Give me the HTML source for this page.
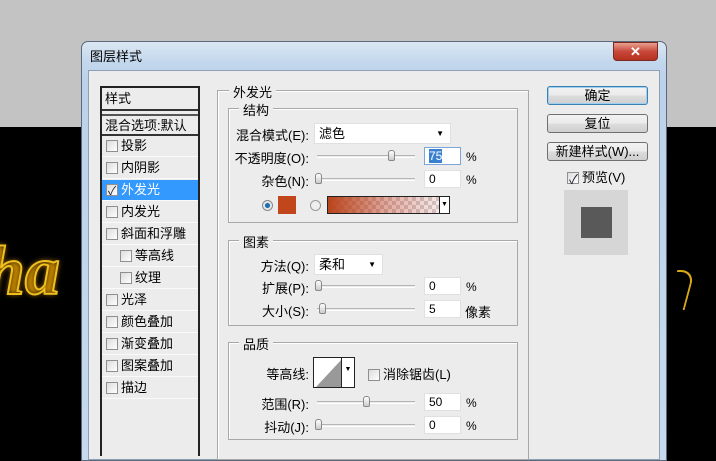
<!DOCTYPE html>
<html><head><meta charset="utf-8"><style>
*{box-sizing:border-box;margin:0;padding:0}
body{width:716px;height:450px;overflow:hidden;position:relative;background:#000;font-family:"Liberation Sans","Microsoft YaHei","Noto Sans CJK SC",sans-serif;font-size:12px;color:#000}
.a{position:absolute}
.top{left:0;top:0;width:716px;height:127px;background:#c3c3c3}
.frame{left:81px;top:41px;width:586px;height:420px;border-radius:7px 7px 0 0;background:linear-gradient(180deg,#dbe7f3 0,#c3d7ec 20px,#bcd2ea 40px,#c6d9ee 100%);border:1px solid #5a6a7c}
.client{left:88px;top:70px;width:572px;height:390px;background:#ececec;border:1px solid #8ea0b4}
.lbl{white-space:nowrap}
.list{left:100px;top:86px;width:100px;height:370px;border:2px solid #222;border-bottom:none;background:#ececec}
.item{position:absolute;left:0;width:96px;height:21px;border-bottom:1px solid #fafafa;line-height:20px;font-size:13px}
.cb{display:inline-block;width:12px;height:12px;border:1px solid #8f8f8f;background:linear-gradient(135deg,#dcdcdc,#fff);vertical-align:-2px;margin-right:3px}
.grp{border:1px solid #a8a8a8;box-shadow:1px 1px 0 #fff inset}
.gt{position:absolute;background:#ececec;padding:0 4px;font-size:13px}
.inp{background:#fff;border:1px solid #e0e0e0;height:18px;width:37px;line-height:17px;padding-left:4px}
.track{height:3px;border-top:1px solid #b5b5b5;border-bottom:1px solid #fff;width:98px}
.th{width:7px;height:11px;border:1px solid #888;border-radius:3px 3px 2px 2px;background:linear-gradient(#fff,#ccc)}
.btn{left:547px;width:101px;height:19px;border:1px solid #707070;border-radius:3px;background:linear-gradient(#f2f2f2 0,#ebebeb 50%,#dddddd 51%,#cfcfcf 100%);text-align:center;line-height:17px;font-size:13px}
.rt{text-align:right;width:90px}
</style></head><body>
<div class="a top"></div>
<div class="a" style="left:-14px;top:232px;font:italic bold 70px 'Liberation Serif',serif;color:transparent;-webkit-text-stroke:2px #f0c020;text-shadow:0 0 6px #c98a00">ha</div>
<div class="a" style="left:672px;top:270px;width:18px;height:40px;border:2px solid #d9a816;border-left:none;border-bottom:none;border-radius:0 14px 0 0;transform:skewX(-15deg)"></div>
<div class="a frame"></div>
<div class="a lbl" style="left:90px;top:46px;font-size:13px">图层样式</div>
<div class="a" style="left:613px;top:42px;width:45px;height:19px;border:1px solid #7a2a20;border-radius:0 0 4px 4px;background:linear-gradient(#e8a090,#c8483a 50%,#b53020);color:#fff;text-align:center;font:bold 13px/17px 'Liberation Sans',sans-serif">✕</div>
<div class="a client"></div>

<div class="a list">
 <div class="item" style="top:0;height:23px;border-bottom:2px solid #333;line-height:22px;padding-left:3px;background:#ececec">样式</div>
 <div class="item" style="top:26px;height:22px;border-top:2px solid #555;border-bottom:2px solid #333;line-height:19px;padding-left:3px">混合选项:默认</div>
 <div class="item" style="top:48px;padding-left:4px"><span class="cb"></span>投影</div>
 <div class="item" style="top:70px;padding-left:4px"><span class="cb"></span>内阴影</div>
 <div class="item" style="top:92px;padding-left:4px;background:#3399ff;color:#fff"><span class="cb" style="position:relative"><span style="position:absolute;left:1px;top:-4px;color:#223;font-size:12px">✓</span></span>外发光</div>
 <div class="item" style="top:114px;padding-left:4px"><span class="cb"></span>内发光</div>
 <div class="item" style="top:136px;padding-left:4px"><span class="cb"></span>斜面和浮雕</div>
 <div class="item" style="top:158px;padding-left:18px"><span class="cb"></span>等高线</div>
 <div class="item" style="top:180px;padding-left:18px"><span class="cb"></span>纹理</div>
 <div class="item" style="top:202px;padding-left:4px"><span class="cb"></span>光泽</div>
 <div class="item" style="top:224px;padding-left:4px"><span class="cb"></span>颜色叠加</div>
 <div class="item" style="top:246px;padding-left:4px"><span class="cb"></span>渐变叠加</div>
 <div class="item" style="top:268px;padding-left:4px"><span class="cb"></span>图案叠加</div>
 <div class="item" style="top:290px;padding-left:4px"><span class="cb"></span>描边</div>
</div>

<div class="a grp" style="left:217px;top:90px;width:312px;height:370px"></div>
<div class="gt" style="left:229px;top:82px">外发光</div>
<div class="a grp" style="left:228px;top:108px;width:290px;height:115px"></div>
<div class="gt" style="left:239px;top:100px">结构</div>
<div class="a grp" style="left:228px;top:240px;width:290px;height:86px"></div>
<div class="gt" style="left:239px;top:232px">图素</div>
<div class="a grp" style="left:228px;top:342px;width:290px;height:98px"></div>
<div class="gt" style="left:239px;top:334px">品质</div>

<div class="a lbl rt" style="left:219px;top:125px;font-size:13px">混合模式(E):</div>
<div class="a" style="left:314px;top:123px;width:137px;height:21px;background:#fff;border:1px solid #e0e0e0;padding-left:4px;line-height:20px;font-size:13px">滤色<span style="position:absolute;right:6px;top:0;font-size:8px">▼</span></div>
<div class="a lbl rt" style="left:219px;top:148px;font-size:13px">不透明度(O):</div>
<div class="a track" style="left:317px;top:155px"></div><div class="a th" style="left:388px;top:150px"></div>
<div class="a inp" style="left:424px;top:147px;border-color:#7aa7d8"><span style="background:#3a80d0;color:#fff">75</span></div>
<div class="a" style="left:466px;top:150px">%</div>
<div class="a lbl rt" style="left:219px;top:171px;font-size:13px">杂色(N):</div>
<div class="a track" style="left:317px;top:178px"></div><div class="a th" style="left:315px;top:173px"></div>
<div class="a inp" style="left:424px;top:170px">0</div><div class="a" style="left:466px;top:173px">%</div>
<div class="a" style="left:262px;top:200px;width:11px;height:11px;border-radius:50%;border:1px solid #888;background:radial-gradient(#1a6fb0 35%,#e8e8e8 45%)"></div>
<div class="a" style="left:278px;top:196px;width:18px;height:18px;background:#c1461b"></div>
<div class="a" style="left:310px;top:200px;width:11px;height:11px;border-radius:50%;border:1px solid #999;background:#eee"></div>
<div class="a" style="left:327px;top:196px;width:123px;height:18px;border:1px solid #222;background:linear-gradient(90deg,#b9441b,rgba(200,90,70,.5) 50%,rgba(230,210,210,.2)),repeating-conic-gradient(#ccc 0 25%,#fff 0 50%) 0 0/8px 8px"><div style="position:absolute;right:0;top:0;width:10px;height:16px;background:#fff;border-left:1px solid #222;font-size:7px;text-align:center;line-height:16px">▼</div></div>

<div class="a lbl rt" style="left:219px;top:256px;font-size:13px">方法(Q):</div>
<div class="a" style="left:314px;top:254px;width:69px;height:21px;background:#fff;border:1px solid #e0e0e0;padding-left:4px;line-height:20px;font-size:13px">柔和<span style="position:absolute;right:6px;top:0;font-size:8px">▼</span></div>
<div class="a lbl rt" style="left:219px;top:278px;font-size:13px">扩展(P):</div>
<div class="a track" style="left:317px;top:285px"></div><div class="a th" style="left:315px;top:280px"></div>
<div class="a inp" style="left:424px;top:277px">0</div><div class="a" style="left:466px;top:280px">%</div>
<div class="a lbl rt" style="left:219px;top:301px;font-size:13px">大小(S):</div>
<div class="a track" style="left:317px;top:308px"></div><div class="a th" style="left:319px;top:303px"></div>
<div class="a inp" style="left:424px;top:300px">5</div><div class="a" style="left:465px;top:302px;font-size:13px">像素</div>

<div class="a lbl rt" style="left:219px;top:364px;font-size:13px">等高线:</div>
<div class="a" style="left:313px;top:357px;width:42px;height:31px;border:1px solid #222;background:#fff"><svg width="27" height="29" style="position:absolute;left:1px;top:0"><polygon points="1,29 27,1 27,29" fill="#999"/></svg><div style="position:absolute;right:0;top:0;width:13px;height:29px;border-left:1px solid #222;font-size:7px;text-align:center;line-height:24px">▼</div></div>
<div class="a lbl" style="left:368px;top:364px;font-size:13px"><span class="cb"></span>消除锯齿(L)</div>
<div class="a lbl rt" style="left:219px;top:394px;font-size:13px">范围(R):</div>
<div class="a track" style="left:317px;top:401px"></div><div class="a th" style="left:363px;top:396px"></div>
<div class="a inp" style="left:424px;top:393px">50</div><div class="a" style="left:466px;top:396px">%</div>
<div class="a lbl rt" style="left:219px;top:417px;font-size:13px">抖动(J):</div>
<div class="a track" style="left:317px;top:424px"></div><div class="a th" style="left:315px;top:419px"></div>
<div class="a inp" style="left:424px;top:416px">0</div><div class="a" style="left:466px;top:419px">%</div>

<div class="a btn" style="top:86px;border-color:#3c7fb1;box-shadow:0 0 0 1px #9fd0f0 inset">确定</div>
<div class="a btn" style="top:114px">复位</div>
<div class="a btn" style="top:142px">新建样式(W)...</div>
<div class="a lbl" style="left:567px;top:167px;font-size:13px"><span class="cb" style="position:relative"><span style="position:absolute;left:1px;top:-4px;color:#223">✓</span></span>预览(V)</div>
<div class="a" style="left:564px;top:190px;width:64px;height:65px;background:#d6d6d6"></div>
<div class="a" style="left:581px;top:207px;width:31px;height:31px;background:#595959"></div>
</body></html>
